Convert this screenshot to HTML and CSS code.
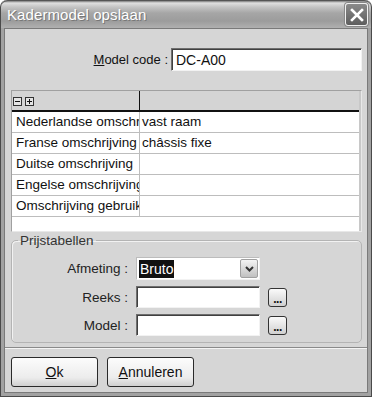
FILE: index.html
```html
<!DOCTYPE html>
<html lang="nl">
<head>
    <meta charset="UTF-8">
    <title>Kadermodel opslaan</title>
    <link rel="stylesheet" href="styles.css">
</head>
<body>
    <div class="window">
        <div class="titlebar">
            <span class="title">Kadermodel opslaan</span>
            <span class="close-btn">
                <svg width="14" height="14" viewBox="0 0 14 14"><path d="M2 2 L12 12 M12 2 L2 12" stroke="#fff" stroke-width="2.6" stroke-linecap="square"/></svg>
            </span>
        </div>

        <div class="client">
            <div class="code-row">
                <label><u>M</u>odel code :</label>
                <div class="field code-field">DC-A00</div>
            </div>

            <div class="grid">
                <div class="grid-head">
                    <div class="cell head-first">
                        <span class="box"><svg width="7" height="7" viewBox="0 0 7 7"><path d="M1 3.5 H6" stroke="#111" stroke-width="1"/></svg></span>
                        <span class="box"><svg width="7" height="7" viewBox="0 0 7 7"><path d="M1 3.5 H6 M3.5 1 V6" stroke="#111" stroke-width="1"/></svg></span>
                    </div>
                    <div class="cell"></div>
                </div>
                <div class="grid-row"><div class="cell">Nederlandse omschrijving</div><div class="cell">vast raam</div></div>
                <div class="grid-row"><div class="cell">Franse omschrijving</div><div class="cell">châssis fixe</div></div>
                <div class="grid-row"><div class="cell">Duitse omschrijving</div><div class="cell"></div></div>
                <div class="grid-row"><div class="cell">Engelse omschrijving</div><div class="cell"></div></div>
                <div class="grid-row"><div class="cell">Omschrijving gebruiker</div><div class="cell"></div></div>
            </div>

            <fieldset class="group">
                <legend>Prijstabellen</legend>
                <div class="group-grid">
                    <label>Afmeting :</label>
                    <div class="field select-field">
                        <span class="selected">Bruto</span>
                        <span class="drop-btn">
                            <svg width="9" height="6" viewBox="0 0 9 6"><path d="M1 1 L4.5 4.5 L8 1" fill="none" stroke="#333" stroke-width="2"/></svg>
                        </span>
                    </div>
                    <span></span>

                    <label>Reeks :</label>
                    <div class="field"></div>
                    <span class="dots-btn">...</span>

                    <label>Model :</label>
                    <div class="field"></div>
                    <span class="dots-btn">...</span>
                </div>
            </fieldset>

            <div class="separator"></div>

            <div class="buttons">
                <button><u>O</u>k</button>
                <button><u>A</u>nnuleren</button>
            </div>
        </div>
    </div>
</body>
</html>
```

FILE: styles.css
```css
body {
    margin: 0;
    font-family: 'Liberation Sans', Arial, sans-serif;
    font-size: 13px;
    color: #111;
    background: #fff;
}
.window {
    width: 372px;
    height: 397px;
    box-sizing: border-box;
    display: flex;
    flex-direction: column;
    background: #a2a2a2;
    border: 1px solid #4a4a4a;
    border-top: none;
    border-radius: 7px 7px 0 0;
    padding: 0 3px 3px;
    overflow: hidden;
}
.titlebar {
    height: 27px;
    margin: 0 -3px;
    display: flex;
    align-items: center;
    justify-content: space-between;
    padding: 0 3px 0 6px;
    background: linear-gradient(#7c7c7c 0, #e0e0e0 2px, #c4c4c4 6px, #a6a6a6 12px, #9c9c9c 20px, #b0b0b0 27px);
    border-top: 1px solid #555;
    border-radius: 7px 7px 0 0;
}
.title {
    color: #fff;
    font-size: 15px;
    letter-spacing: 0.1px;
    text-shadow: 1px 1px 0 #777;
}
.close-btn {
    width: 21px;
    height: 21px;
    display: flex;
    align-items: center;
    justify-content: center;
    background: linear-gradient(#8a8a8a, #5e5e5e);
    border: 1px solid #f0f0f0;
    border-radius: 3px;
    box-shadow: 0 0 0 1px #888;
}
.client {
    flex-grow: 1;
    background: #d6d6d6;
    border: 1px solid #7a7a7a;
    padding: 19px 5px 0 6px;
    display: flex;
    flex-direction: column;
}
.code-row {
    display: flex;
    justify-content: flex-end;
    align-items: center;
    gap: 3px;
}
.field {
    height: 22px;
    box-sizing: border-box;
    background: #fff;
    border: 1px solid;
    border-color: #6e6e6e #f2f2f2 #f2f2f2 #6e6e6e;
    box-shadow: inset 1px 1px 0 #404040;
    padding: 3px 4px;
}
.code-field {
    width: 191px;
    height: 23px;
    font-size: 14px;
}
.grid {
    margin-top: 19px;
    height: 142px;
    box-sizing: border-box;
    background: #fff;
    border: 1px solid;
    border-color: #a0a0a0 #e8e8e8 #e8e8e8 #a0a0a0;
    box-shadow: inset -2px 0 0 #c8c8c8;
    overflow: hidden;
}
.grid-head, .grid-row {
    display: grid;
    grid-template-columns: 128px 1fr;
}
.grid-head {
    height: 19px;
    background: #d4d4d4;
    border-bottom: 2px solid #111;
    margin-right: 2px;
}
.grid-head .cell:first-child {
    border-right: 1px solid #111;
}
.head-first {
    display: flex;
    align-items: center;
    gap: 3px;
    padding: 2px 0 0 1px;
}
.box {
    width: 7px;
    height: 7px;
    border: 1px solid #333;
    display: flex;
    background: #e4e4e4;
}
.grid-row {
    height: 21px;
    box-sizing: border-box;
    border-bottom: 1px solid #bdbdbd;
    margin-right: 2px;
}
.grid-row .cell {
    white-space: nowrap;
    overflow: hidden;
    line-height: 20px;
    padding-left: 4px;
    font-size: 13.5px;
}
.grid-row .cell:first-child {
    border-right: 1px solid #bdbdbd;
}
.grid-row .cell:last-child {
    padding-left: 2px;
}
.group {
    margin: 1px 0 0;
    padding: 9px 6px 6px 6px;
    border: 1px solid #b4b4b4;
    border-radius: 5px;
    box-shadow: inset 1px 1px 0 #f2f2f2;
}
.group legend {
    padding: 0 2px;
    color: #333;
    font-size: 13.5px;
}
.group-grid {
    display: grid;
    grid-template-columns: 110px 124px 19px;
    column-gap: 8px;
    row-gap: 6px;
    align-items: center;
}
.group-grid label {
    text-align: right;
    font-size: 13.5px;
    color: #222;
}
.select-field {
    height: 23px;
    display: flex;
    align-items: center;
    justify-content: space-between;
    padding: 1px 1px 1px 2px;
    box-shadow: none;
    border-color: #bcbcbc #f2f2f2 #f2f2f2 #bcbcbc;
}
.selected {
    background: #111;
    color: #fff;
    font-size: 14px;
    padding: 1px 1px;
}
.drop-btn {
    width: 18px;
    height: 19px;
    display: flex;
    align-items: center;
    justify-content: center;
    background: linear-gradient(#f4f4f4, #c0c0c0);
    border: 1px solid #a0a0a0;
    border-radius: 2px;
    box-sizing: border-box;
}
.dots-btn {
    width: 19px;
    height: 19px;
    box-sizing: border-box;
    border: 1px solid #333;
    border-radius: 3px;
    background: linear-gradient(#fafafa, #d0d0d0);
    font-weight: bold;
    font-size: 12px;
    line-height: 12px;
    padding-top: 4px;
    text-align: center;
    letter-spacing: -0.5px;
}
.separator {
    margin: 4px -5px 0 -6px;
    border-top: 1px solid #8a8a8a;
    border-bottom: 1px solid #f4f4f4;
}
.buttons {
    display: flex;
    gap: 9px;
    margin-top: 8px;
}
.buttons button {
    width: 87px;
    height: 30px;
    font-family: 'Liberation Sans', Arial, sans-serif;
    font-size: 14px;
    color: #111;
    border: 1px solid #2a2a2a;
    border-radius: 3px;
    background: linear-gradient(#fcfcfc, #ececec 70%, #d0d0d0);
    padding: 0;
}
```
